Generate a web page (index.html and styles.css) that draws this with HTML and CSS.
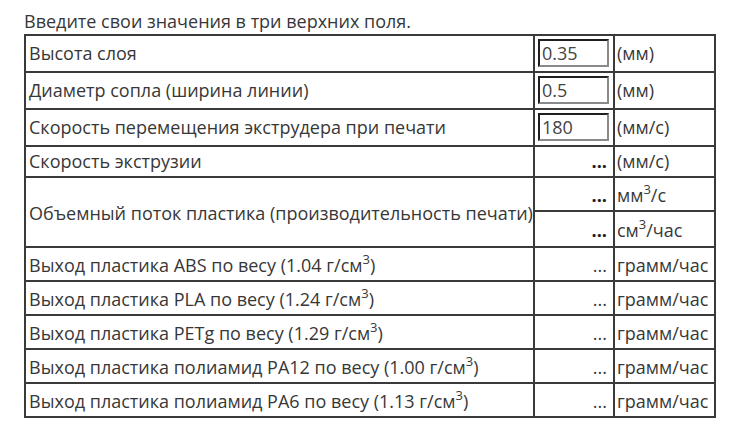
FILE: index.html
```html
<!DOCTYPE html>
<html lang="ru">
<head>
<meta charset="utf-8">
<link rel="stylesheet" href="styles.css">
</head>
<body>
<div class="page">
  <p class="intro">Введите свои значения в три верхних поля.</p>
  <table class="calc">
    <colgroup>
      <col class="c-label">
      <col class="c-val">
      <col class="c-unit">
    </colgroup>
    <tr class="r-in">
      <td>Высота слоя</td>
      <td class="val"><input class="field" type="text" value="0.35"></td>
      <td class="unit">(мм)</td>
    </tr>
    <tr class="r-in">
      <td>Диаметр сопла (ширина линии)</td>
      <td class="val"><input class="field" type="text" value="0.5"></td>
      <td class="unit">(мм)</td>
    </tr>
    <tr class="r-in">
      <td>Скорость перемещения экструдера при печати</td>
      <td class="val"><input class="field" type="text" value="180"></td>
      <td class="unit">(мм/с)</td>
    </tr>
    <tr>
      <td>Скорость экструзии</td>
      <td class="val res"><b>...</b></td>
      <td class="unit">(мм/с)</td>
    </tr>
    <tr class="r-sup">
      <td rowspan="2">Объемный поток пластика (производительность печати)</td>
      <td class="val res"><b>...</b></td>
      <td class="unit">мм<sup>3</sup>/с</td>
    </tr>
    <tr class="r-sup r-tall">
      <td class="val res"><b>...</b></td>
      <td class="unit">см<sup>3</sup>/час</td>
    </tr>
    <tr class="r-sup">
      <td>Выход пластика ABS по весу (1.04 г/см<sup>3</sup>)</td>
      <td class="val res">...</td>
      <td class="unit">грамм/час</td>
    </tr>
    <tr class="r-sup">
      <td>Выход пластика PLA по весу (1.24 г/см<sup>3</sup>)</td>
      <td class="val res">...</td>
      <td class="unit">грамм/час</td>
    </tr>
    <tr class="r-sup">
      <td>Выход пластика PETg по весу (1.29 г/см<sup>3</sup>)</td>
      <td class="val res">...</td>
      <td class="unit">грамм/час</td>
    </tr>
    <tr class="r-sup">
      <td>Выход пластика полиамид PA12 по весу (1.00 г/см<sup>3</sup>)</td>
      <td class="val res">...</td>
      <td class="unit">грамм/час</td>
    </tr>
    <tr class="r-sup">
      <td>Выход пластика полиамид PA6 по весу (1.13 г/см<sup>3</sup>)</td>
      <td class="val res">...</td>
      <td class="unit">грамм/час</td>
    </tr>
  </table>
</div>
</body>
</html>
```
FILE: styles.css
```css
html, body {
  margin: 0;
  padding: 0;
  background: #fff;
}
body {
  font-family: "Open Sans", "DejaVu Sans", sans-serif;
  font-size: 18px;
  color: #373737;
}
.page {
  padding: 9px 0 0 24px;
}
.intro {
  margin: 0 0 1px;
  line-height: 24px;
  height: 24px;
}
.calc {
  width: 690px;
  border-collapse: separate;
  border-spacing: 0;
  border: 1px solid #3a3a3a;
  table-layout: fixed;
}
.c-label { width: 509px; }
.c-val { width: 80px; }
.c-unit { width: 101px; }
.calc td {
  border: 1px solid #3a3a3a;
  padding: 2px 2px 2px 3px;
  line-height: 25px;
  height: 25px;
  vertical-align: middle;
  white-space: nowrap;
}
.calc tr.r-sup td {
  padding-top: 5px;
  padding-bottom: 2px;
  height: 25px;
}
.calc tr.r-sup.r-tall td {
  padding-top: 6px;
  padding-bottom: 3px;
}
.calc tr.r-in td {
  padding-top: 3px;
  padding-bottom: 4px;
  height: 28px;
}
.calc td.val {
  padding-right: 6px;
  padding-left: 3px;
  text-align: right;
}
.calc tr.r-in td.val {
  text-align: left;
}
.calc td.unit {
  padding-left: 2px;
}
.calc td.res b {
  font-weight: 700;
  color: #1e1e1e;
}
sup {
  font-size: 13px;
  line-height: 1;
  vertical-align: 8px;
}
.field {
  box-sizing: border-box;
  width: 71px;
  height: 28px;
  margin: 0;
  padding: 0 2px;
  font-family: "Open Sans", "DejaVu Sans", sans-serif;
  font-size: 18px;
  color: #444;
  background: #fff;
  border: 2px solid;
  border-color: #1f1f1f #8a8a8a #8a8a8a #1f1f1f;
  display: block;
}
```
